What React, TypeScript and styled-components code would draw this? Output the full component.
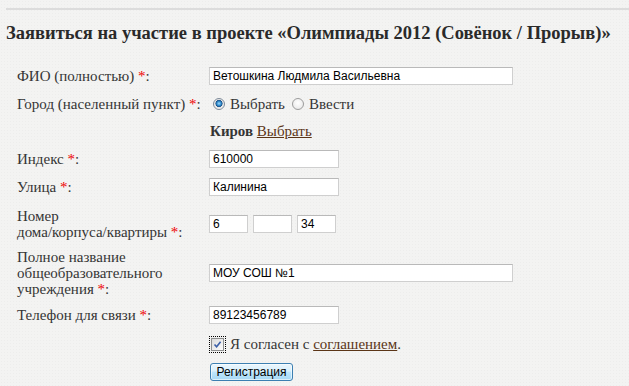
import React from "react";
import styled, { createGlobalStyle } from "styled-components";

const GlobalStyle = createGlobalStyle`
  html, body {
    margin: 0;
    padding: 0;
    background: #f3f3f2;
  }
  body {
    font-family: "Liberation Serif", "DejaVu Serif", serif;
    color: #333;
  }
`;

const Page = styled.div`
  width: 629px;
  height: 386px;
  overflow: hidden;
  padding: 8px 0 0 6px;
  box-sizing: border-box;
  background-color: #f3f3f2;
  background-image: radial-gradient(rgba(0, 0, 0, 0.025) 1px, transparent 1px);
  background-size: 3px 3px;
`;

const Title = styled.h2`
  margin: 0;
  border-top: 2px solid #dcdcdc;
  padding-top: 13px;
  height: 37px;
  box-sizing: border-box;
  font-size: 18.5px;
  line-height: 20px;
  font-weight: bold;
  color: #2a2a2a;
  white-space: nowrap;
`;

const Form = styled.div`
  display: flex;
  flex-direction: column;
  padding-left: 11px;
  margin-top: 17px;
`;

const Row = styled.div<{ $h: number }>`
  display: grid;
  grid-template-columns: 192px auto;
  align-items: center;
  height: ${(p) => p.$h}px;
`;

const Label = styled.div`
  font-size: 15px;
  line-height: 16px;
  color: #353535;
`;

const Star = styled.span`
  color: #e00;
`;

const Field = styled.div`
  display: flex;
  align-items: center;
  gap: 5px;
`;

const TextInput = styled.input<{ $w: number }>`
  width: ${(p) => p.$w}px;
  height: 18px;
  box-sizing: border-box;
  border: 1px solid #cfcfcf;
  border-top-color: #b9b9b9;
  background: #fff;
  padding: 0 3px;
  font-family: "Liberation Sans", Arial, sans-serif;
  font-size: 12px;
  color: #000;
  outline: none;
`;

const Radio = styled.input`
  appearance: none;
  width: 12px;
  height: 12px;
  margin: 0 5px 0 4px;
  border-radius: 50%;
  border: 1px solid #9c9c9c;
  background: radial-gradient(circle at 50% 40%, #fff 0, #e4e4e4 100%);
  &:checked {
    border-color: #7d8a99;
    background: radial-gradient(
      circle at 50% 45%,
      #9fdcff 0,
      #2a86c8 2.2px,
      #1a4f86 3.3px,
      #e2e2e2 3.8px,
      #fafafa 6px
    );
  }
`;

const Option = styled.label`
  font-size: 15px;
  color: #353535;
  display: flex;
  align-items: center;
  margin-right: -2px;
`;

const City = styled.div`
  font-size: 15px;
  padding-left: 1px;
  color: #353535;
`;

const Link = styled.a`
  color: #5b3517;
  text-decoration: underline;
`;

const CheckBox = styled.span`
  display: inline-flex;
  align-items: center;
  justify-content: center;
  width: 13px;
  height: 13px;
  box-sizing: border-box;
  margin: 0 6px 0 2px;
  border: 1px solid #8e8f8f;
  background: linear-gradient(135deg, #dcdcdc, #fbfbfb);
  outline: 1px dotted #000;
  outline-offset: 1px;
`;

const Agree = styled.label`
  display: flex;
  align-items: center;
  font-size: 15px;
  color: #353535;
`;

const Button = styled.button`
  width: 83px;
  height: 18px;
  padding: 0;
  margin-left: 1px;
  border: 1px solid #3c7fb1;
  border-radius: 3px;
  background: linear-gradient(#eaf6fd 0%, #d9f0fc 45%, #bee6fd 50%, #a7d9f5 100%);
  box-shadow: inset 0 0 0 1px rgba(255, 255, 255, 0.6);
  font-family: "Liberation Sans", Arial, sans-serif;
  font-size: 12px;
  color: #000;
`;

export default function App() {
  return (
    <Page>
      <GlobalStyle />
      <Title>Заявиться на участие в проекте «Олимпиады 2012 (Совёнок / Прорыв)»</Title>
      <Form>
        <Row $h={28}>
          <Label>
            ФИО (полностью) <Star>*</Star>:
          </Label>
          <Field>
            <TextInput $w={304} defaultValue="Ветошкина Людмила Васильевна" />
          </Field>
        </Row>
        <Row $h={28}>
          <Label>
            Город (населенный пункт) <Star>*</Star>:
          </Label>
          <Field>
            <Option>
              <Radio type="radio" name="city" defaultChecked />
              Выбрать
            </Option>
            <Option>
              <Radio type="radio" name="city" />
              Ввести
            </Option>
          </Field>
        </Row>
        <Row $h={27}>
          <Label />
          <City>
            <b>Киров</b> <Link href="#">Выбрать</Link>
          </City>
        </Row>
        <Row $h={27}>
          <Label>
            Индекс <Star>*</Star>:
          </Label>
          <Field>
            <TextInput $w={130} defaultValue="610000" />
          </Field>
        </Row>
        <Row $h={29}>
          <Label>
            Улица <Star>*</Star>:
          </Label>
          <Field>
            <TextInput $w={130} defaultValue="Калинина" />
          </Field>
        </Row>
        <Row $h={46}>
          <Label>
            Номер
            <br />
            дома/корпуса/квартиры <Star>*</Star>:
          </Label>
          <Field>
            <TextInput $w={39} defaultValue="6" />
            <TextInput $w={39} defaultValue="" />
            <TextInput $w={39} defaultValue="34" />
          </Field>
        </Row>
        <Row $h={52}>
          <Label>
            Полное название
            <br />
            общеобразовательного
            <br />
            учреждения <Star>*</Star>:
          </Label>
          <Field>
            <TextInput $w={304} defaultValue="МОУ СОШ №1" />
          </Field>
        </Row>
        <Row $h={32}>
          <Label>
            Телефон для связи <Star>*</Star>:
          </Label>
          <Field>
            <TextInput $w={130} defaultValue="89123456789" />
          </Field>
        </Row>
        <Row $h={26}>
          <Label />
          <Agree>
            <CheckBox>
              <svg width="9" height="9" viewBox="0 0 9 9">
                <path d="M1.5 4.5 L3.6 6.8 L7.6 1.8" fill="none" stroke="#3b5fa8" strokeWidth="1.6" />
              </svg>
            </CheckBox>
            Я согласен с&nbsp;<Link href="#">соглашением</Link>.
          </Agree>
        </Row>
        <Row $h={30}>
          <Label />
          <Field>
            <Button>Регистрация</Button>
          </Field>
        </Row>
      </Form>
    </Page>
  );
}
